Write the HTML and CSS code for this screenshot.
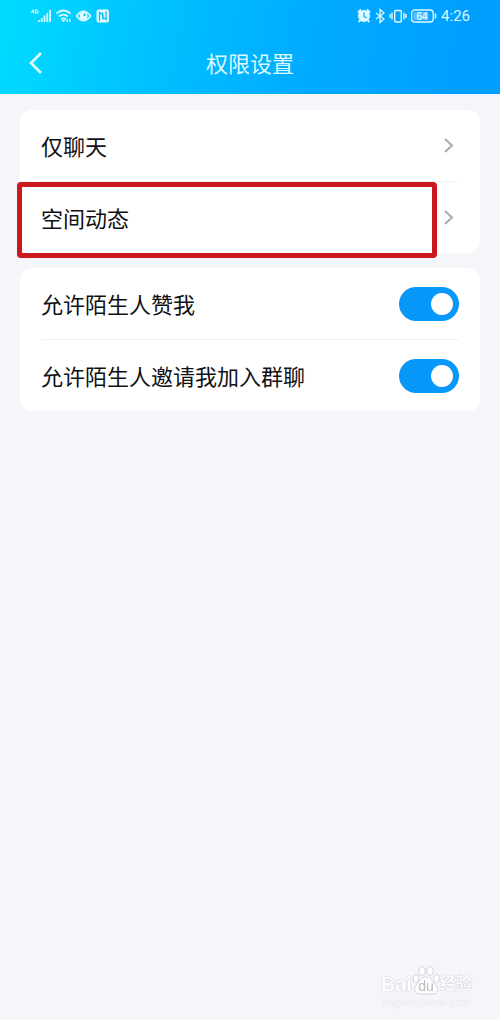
FILE: index.html
```html
<!DOCTYPE html>
<html lang="zh-CN">
<head>
<meta charset="utf-8">
<meta name="viewport" content="width=device-width, initial-scale=1">
<title>权限设置</title>
<link rel="stylesheet" href="styles.css">
</head>
<body>
<header class="header">
  <div class="status">
    <div class="status-group">
      <svg width="80" height="16" viewBox="0 0 80 16" aria-hidden="true">
        <g fill="none" stroke="currentColor" stroke-width="1.1">
          <path d="M3.5 1.500 1.500 4H4M3.700 2.500v3M8 2H5.500v3H8V3.800H7"/>
        </g>
        <path fill="currentColor" d="M8 12h1.800v2H8zM10.800 10h1.800v4h-1.800zM13.600 7.500h1.800V14h-1.800zM16.400 5h1.800v9h-1.800zM19.200 2H21v12h-1.800z"/>
        <g fill="none" stroke="currentColor" stroke-width="1.800">
          <path d="M26.500 5.500q7-6 14 0M29 8.500q4.500-3.800 9 0M31.300 11.300q2.200-1.800 4.400 0"/>
        </g>
        <path fill="currentColor" d="m31.500 12 2 2.200 2-2.200zM36.500 11h1.500v3h-1.500zM39 11h1.500v3H39z"/>
        <path fill="none" stroke="currentColor" stroke-width="1.600" d="M46.500 8q7-9.500 14 0-7 9.500-14 0z"/>
        <circle cx="53.500" cy="8" r="4" fill="currentColor"/>
        <circle cx="54.500" cy="7" r="1.200" fill="#00c8ff"/>
        <rect x="66.500" y="1.500" width="12.500" height="13" rx="2" fill="currentColor"/>
        <path fill="none" stroke="#00c0ff" stroke-width="1.200" d="M69.500 13V4.500L73 7v4.500M76 3v8.500L72.500 9V4.500"/>
      </svg>
    </div>
    <div class="status-group">
      <svg width="80" height="16" viewBox="0 0 80 16" aria-hidden="true">
        <circle cx="7" cy="8" r="6" fill="currentColor"/>
        <path fill="none" stroke="currentColor" stroke-width="1.800" d="M1 4.500 4 1.500M13 4.500 10 1.500M3 12.500 1.500 14M11 12.500l1.500 1.500"/>
        <path fill="none" stroke="#00aaff" stroke-width="1.200" d="M7 4.500V8.500l2.500 1.500"/>
        <path fill="none" stroke="currentColor" stroke-width="1.300" d="m19 5 8 6-4 3.500v-13L27 5l-8 6"/>
        <rect x="37.700" y="2.500" width="6.600" height="11.500" rx="1" fill="none" stroke="currentColor" stroke-width="1.400"/>
        <path fill="none" stroke="currentColor" stroke-width="1.400" d="M35 4.500v7M47 4.500v7M33 6v4M49 6v4"/>
        <rect x="54.700" y="2" width="21.500" height="12" rx="3" fill="none" stroke="currentColor" stroke-width="1.300"/>
        <rect x="56.500" y="4" width="15" height="8" rx="1.500" fill="currentColor" opacity=".4"/>
        <path stroke="currentColor" stroke-width="1.600" d="M78.500 5.500v5"/>
        <text class="battery" x="65" y="12" text-anchor="middle">64</text>
      </svg>
      <span class="clock">4:26</span>
    </div>
  </div>
  <div class="nav">
    <button class="back" type="button" aria-label="返回">
      <svg width="16" height="24" viewBox="0 0 16 24" aria-hidden="true"><path d="M13 2 3 12l10 10" fill="none" stroke="currentColor" stroke-width="2.800"/></svg>
    </button>
    <h1 class="title">权限设置</h1>
  </div>
</header>
<main class="content">
  <section class="card">
    <a class="row" href="#chat"><span class="label">仅聊天</span>
      <svg class="chevron" width="12" height="16" viewBox="0 0 12 16" aria-hidden="true"><path d="m2 1 7 6.500L2 14"/></svg>
    </a>
    <a class="row row-marked" href="#space"><span class="label">空间动态</span>
      <svg class="chevron" width="12" height="16" viewBox="0 0 12 16" aria-hidden="true"><path d="m2 1 7 6.500L2 14"/></svg>
    </a>
  </section>
  <section class="card">
    <label class="row"><span class="label">允许陌生人赞我</span><input class="switch" type="checkbox" role="switch" checked></label>
    <label class="row"><span class="label">允许陌生人邀请我加入群聊</span><input class="switch" type="checkbox" role="switch" checked></label>
  </section>
</main>
<div class="watermark">
  <div class="brand">
    <span>Bai</span>
    <span class="paw">
      <svg width="28" height="30" viewBox="0 0 28 30" aria-hidden="true">
        <g fill="#fff" stroke="#d0d2d7" stroke-width="1">
          <ellipse cx="4" cy="12.500" rx="3" ry="4"/><ellipse cx="10" cy="5" rx="3.200" ry="4.200"/><ellipse cx="18" cy="5" rx="3.200" ry="4.200"/><ellipse cx="24.500" cy="12.500" rx="3" ry="4"/>
          <path d="M14 11c5 0 6 4 9 7 5 5 2 10-3 10H8c-5 0-8-5-3-10 3-3 4-7 9-7z"/>
        </g>
      </svg>
      <span class="du">du</span>
    </span>
    <span class="brand-cn">经验</span>
  </div>
  <div class="site">jingyan.baidu.com</div>
</div>
</body>
</html>
```
FILE: styles.css
```css
* { box-sizing: border-box; }

body {
  margin: 0;
  min-height: 100vh;
  background: #f5f6fa;
  color: #101114;
  font-family: "Liberation Sans", "Noto Sans CJK SC", sans-serif;
}

.header {
  color: #dcfaff;
  background: linear-gradient(100deg, #00dcff 0%, #00c3ff 28%, #00acff 60%, #009fff 90%);
}

.status {
  display: flex;
  justify-content: space-between;
  align-items: center;
  height: 32px;
  padding: 0 30px;
}

.status-group {
  display: flex;
  align-items: center;
  gap: 4px;
}

.clock {
  font: 15px/20px Roboto, sans-serif;
}

.battery {
  fill: #fff;
  font: 10px "Liberation Sans", sans-serif;
}

.nav {
  display: grid;
  grid-template-columns: 48px 1fr 48px;
  align-items: center;
  height: 62px;
}

.back {
  display: flex;
  justify-content: flex-end;
  padding: 0 4px;
  border: 0;
  background: none;
  color: inherit;
}

.title {
  margin: 0;
  padding-top: 4px;
  font-size: 22px;
  line-height: 32px;
  font-weight: 400;
  text-align: center;
}

.content {
  display: flex;
  flex-direction: column;
  gap: 15px;
  padding: 16px 20px;
}

.card {
  padding: 0 21px;
  border-radius: 12px;
  background: #fff;
}

.row {
  display: flex;
  justify-content: space-between;
  align-items: center;
  height: 71px;
  color: inherit;
  font-size: 22px;
  line-height: 32px;
  text-decoration: none;
}

.row + .row {
  height: 72px;
  border-top: 1px solid #f2f2f4;
}

.label {
  padding-top: 4px;
}

.row-marked {
  position: relative;
}

.row-marked::after {
  content: "";
  position: absolute;
  inset: 0 22px -5px -24px;
  border: 5px solid #cb171d;
  border-radius: 4px;
}

.chevron {
  margin-right: 4px;
  fill: none;
  stroke: #a9aaae;
  stroke-width: 2;
}

.switch {
  appearance: none;
  display: flex;
  justify-content: flex-end;
  align-items: center;
  width: 60px;
  height: 34px;
  margin: 0;
  padding: 0 6px;
  border-radius: 17px;
  background: #0898fa;
}

.switch::before {
  content: "";
  width: 22px;
  height: 22px;
  border-radius: 50%;
  background: #fff;
}

.switch:not(:checked) {
  justify-content: flex-start;
  background: #d5d6da;
}

.watermark {
  position: fixed;
  right: 28px;
  bottom: 12px;
  color: #fff;
  text-shadow: 0 0 1px #b4b7bd, 0 0 1px #b4b7bd;
}

.brand {
  display: flex;
  align-items: flex-end;
  font-size: 20px;
  line-height: 24px;
  font-weight: 700;
}

.paw {
  position: relative;
  height: 30px;
}

.du {
  position: absolute;
  inset: 12px 0 0;
  color: #b9bcc2;
  font-size: 14px;
  font-weight: 400;
  line-height: 16px;
  text-align: center;
  text-shadow: none;
}

.brand-cn {
  font-size: 16px;
}

.site {
  color: #f5f6fa;
  font-size: 11px;
  line-height: 12px;
  text-align: center;
  text-shadow: 0 0 1px #d0d2d7;
}
```
